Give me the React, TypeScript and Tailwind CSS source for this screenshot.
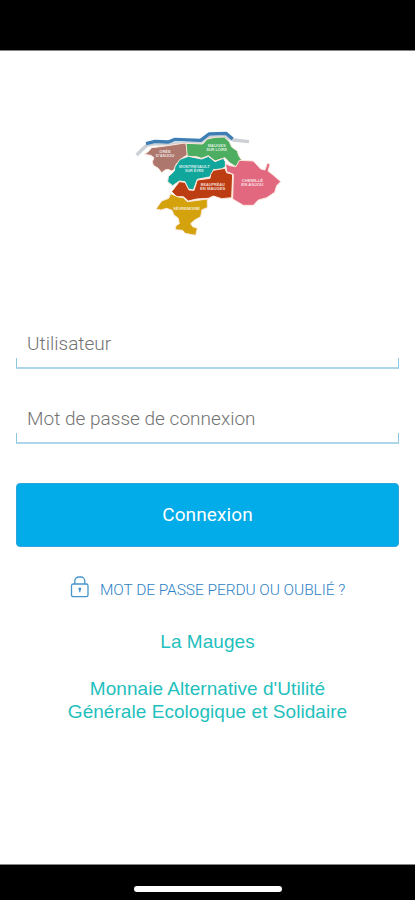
import React from "react";

const REGIONS = [
    { name: "oree", fill: "#ad776d", d: "M43 88 L55 80 L65 68 L100 64 L165 54 L173 65 L172 90 L158 98 L150 110 L138 118 L134 132 L125 138 L114 133 L105 135 L95 143 L85 130 L70 121 L67 110 L72 98 L62 91 Z" },
    { name: "loire", fill: "#4dad61", d: "M168 55 L218 57 L232 42 L255 37 L283 36 L298 50 L305 66 L322 78 L326 92 L335 105 L330 120 L318 125 L300 114 L285 98 L255 108 L235 92 L215 100 L200 95 L172 94 Z" },
    { name: "montrevault", fill: "#11a69c", d: "M115 155 L133 138 L135 125 L150 103 L175 94 L195 98 L215 102 L235 94 L255 110 L280 100 L286 110 L286 125 L275 132 L250 134 L243 155 L202 163 L190 195 L175 192 L165 170 L148 168 L128 182 L113 170 Z" },
    { name: "beaupreau", fill: "#bd3d12", d: "M125 200 L148 170 L165 172 L177 195 L192 196 L202 165 L240 160 L242 148 L250 136 L285 130 L290 143 L308 148 L305 218 L275 221 L250 213 L235 220 L200 222 L175 228 L160 215 L140 215 Z" },
    { name: "chemille", fill: "#e26880", d: "M287 116 L300 122 L318 125 L328 106 L370 108 L392 132 L405 135 L412 114 L420 118 L414 138 L432 152 L452 170 L440 182 L434 202 L410 218 L385 225 L370 241 L340 241 L308 222 L310 148 L290 140 Z" },
    { name: "sevremoine", fill: "#d3a20c", d: "M78 252 L95 228 L116 220 L122 206 L145 216 L160 218 L172 230 L232 222 L232 248 L216 254 L212 275 L194 285 L182 296 L188 305 L202 310 L197 331 L165 325 L158 316 L136 314 L138 302 L148 296 L145 280 L132 270 L126 256 L110 250 L92 255 Z" },
];

const LABELS = [
    { x: 105, y: 83, lines: [{ text: "ORÉE", width: 34 }, { text: "D'ANJOU", width: 56 }] },
    { x: 260, y: 67, lines: [{ text: "MAUGES", width: 54 }, { text: "SUR LOIRE", width: 62 }] },
    { x: 193, y: 129, lines: [{ text: "MONTREVAULT", width: 92 }, { text: "SUR ÈVRE", width: 56 }] },
    { x: 367, y: 172, lines: [{ text: "CHEMILLÉ", width: 64 }, { text: "EN ANJOU", width: 66 }] },
    { x: 248, y: 183, lines: [{ text: "BEAUPRÉAU", width: 72 }, { text: "EN MAUGES", width: 76 }] },
    { x: 170, y: 256, lines: [{ text: "SÈVREMOINE", width: 80 }] },
];

function MapLogo() {
    return (
        <svg viewBox="0 0 465 345" className="ml-[130px] block h-[115px] w-[155px]" aria-label="Les Mauges">
            <path d="M20 90 L38 72 L52 60 L78 56 L130 57 L210 54 L232 38 L285 35 L310 45 L357 50" fill="none" stroke="#ccd0d5" strokeWidth="10" strokeLinejoin="round" />
            <path d="M48 56 L75 49 L115 51 L135 43 L212 46 L237 27 L288 25 L308 42" fill="none" stroke="#3d7fb5" strokeWidth="10" strokeLinejoin="round" />
            {REGIONS.map((r) => (
                <path key={r.name} d={r.d} fill={r.fill} stroke="#fbe8dd" strokeWidth="3" strokeLinejoin="round" />
            ))}
            {LABELS.map((l) => (
                <g key={l.x} fill="#fff" fillOpacity="0.8" textAnchor="middle" fontFamily="Liberation Sans, sans-serif" fontWeight="700" fontSize="11">
                    {l.lines.map((line, i) => (
                        <text key={line.text} x={l.x} y={l.y + i * 12} textLength={line.width} lengthAdjust="spacingAndGlyphs">
                            {line.text}
                        </text>
                    ))}
                </g>
            ))}
        </svg>
    );
}

function Field({ label, type }: { label: string; type: string }) {
    return (
        <div className="h-[45px]">
            <input
                type={type}
                placeholder={label}
                className="block h-[34px] w-full bg-transparent px-[11px] pt-[5px] text-[19px] font-light tracking-[0.02px] text-[#555] outline-none placeholder:text-[#737373]"
            />
            <div className="h-[11px] border-x border-b-2 border-x-[#8ec7e2] border-b-[#add7e8]"></div>
        </div>
    );
}

function LockIcon() {
    return (
        <svg viewBox="0 0 20 24" className="h-[24px] w-[20px]" fill="none" stroke="#4695cb" strokeWidth="1.3">
            <rect x="1.5" y="9" width="16.5" height="12.7" rx="1.8" />
            <path d="M4.8 9 V6 A4 4 0 0 1 8.8 2 H10.8 A4 4 0 0 1 14.8 6 V9" />
            <circle cx="9.8" cy="14" r="0.8" fill="#3285c4" />
            <path d="M9.8 14 V17.2" />
        </svg>
    );
}

export default function App() {
    return (
        <div className="flex h-[900px] w-[415px] flex-col overflow-hidden bg-white font-['Roboto',sans-serif]">
            <div className="h-[51px] shrink-0 border-b border-[#858285] bg-black"></div>

            <main className="flex h-[813px] shrink-0 flex-col pt-[74px]">
                <MapLogo />

                <form className="mt-[84px] px-4" onSubmit={(e) => e.preventDefault()}>
                    <Field label="Utilisateur" type="text" />
                    <div className="h-[30px]"></div>
                    <Field label="Mot de passe de connexion" type="password" />

                    <button
                        type="submit"
                        className="mt-[39px] block h-[64px] w-full rounded-[4px] border border-[#2ba5da] bg-[#02ace8] text-[19px] tracking-[0.1px] text-white"
                    >
                        Connexion
                    </button>
                </form>

                <a href="#" className="mt-[28px] flex h-[24px] items-center gap-[10px] pl-[70px] text-[15.5px] font-light whitespace-nowrap text-[#2d82c6]">
                    <LockIcon />
                    <span className="pt-[7px] tracking-[-0.07px]">MOT DE PASSE PERDU OU OUBLIÉ ?</span>
                </a>

                <div className="mt-[31px] text-center font-['Liberation_Sans',sans-serif] text-[19px] leading-[23px] tracking-[0.05px] text-[#1fc0bd]">
                    <p>La Mauges</p>
                    <p className="mt-[24px]">Monnaie Alternative d'Utilité</p>
                    <p>Générale Ecologique et Solidaire</p>
                </div>
            </main>

            <div className="flex h-[36px] shrink-0 justify-center border-t border-[#858585] bg-black pt-[21px]">
                <div className="h-[6px] w-[148px] rounded-full bg-white"></div>
            </div>
        </div>
    );
}
